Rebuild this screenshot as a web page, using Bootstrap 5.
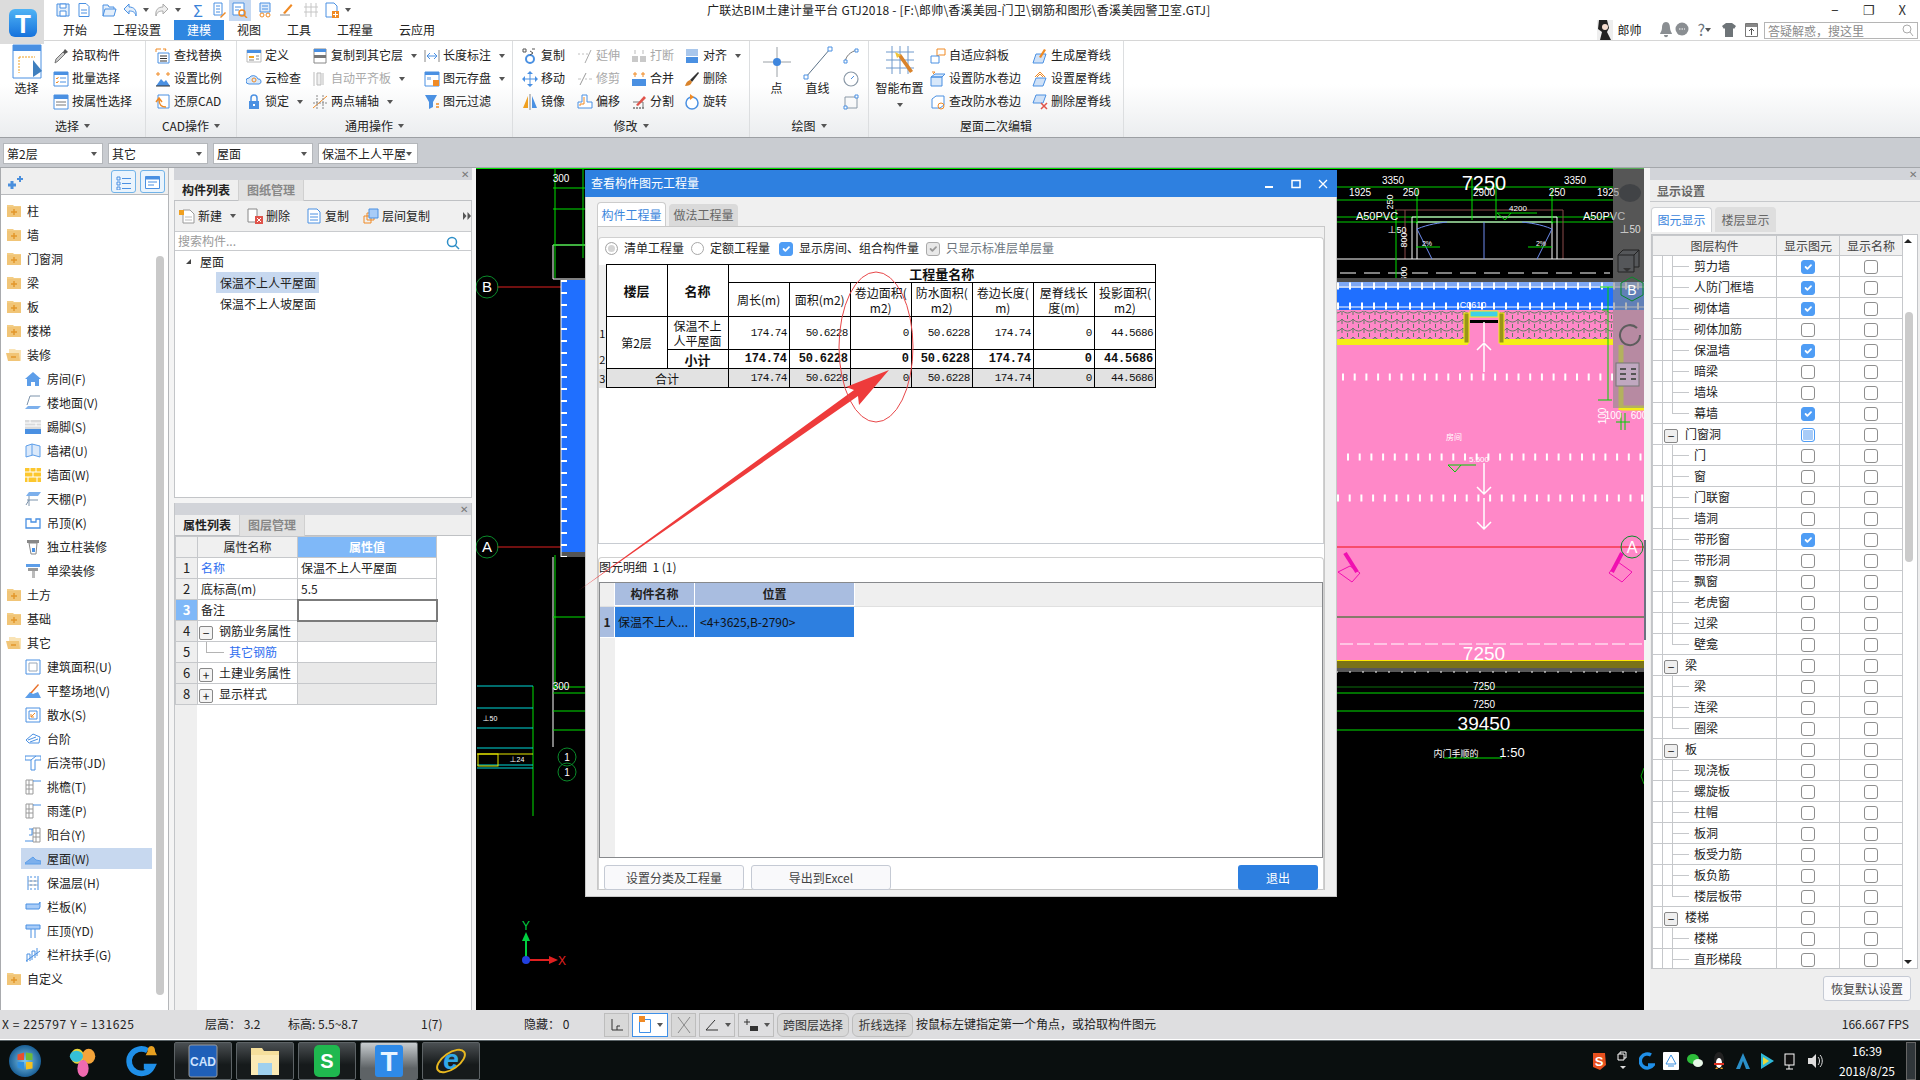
<!DOCTYPE html>
<html lang="zh-CN">
<head>
<meta charset="UTF-8" />
<title>广联达BIM土建计量平台 GTJ2018</title>
<link href="https://cdn.jsdelivr.net/npm/bootstrap@5.3.0/dist/css/bootstrap.min.css" rel="stylesheet">
<style>
  html, body { margin: 0; width: 1920px; height: 1080px; overflow: hidden; }
  body { font: 12px/1.2 "Noto Sans CJK SC", "Liberation Sans", sans-serif; color: #222; background: #f4f4f4; }
  .ico { width: 16px; height: 16px; flex: none; }
  .tri { width: 0; height: 0; flex: none; border-left: 3px solid transparent; border-right: 3px solid transparent; border-top: 4px solid #555; margin-left: 5px; }
  .app-wrap { width: 1920px; height: 1080px; }

  /* title + tabs */
  .app-top { height: 41px; background: #fff; border-bottom: 1px solid #d6d6d6; }
  .app-logo { width: 44px; height: 44px; flex: none; background: #dcdcdc; position: relative; z-index: 3; }
  .tt-row { height: 20px; }
  .tt-txt { letter-spacing: .2px; }
  .qat { width: 663px; padding-left: 11px; gap: 5px; }
  .qat .ico.on { background: #c6d9f2; outline: 3px solid #c6d9f2; }
  .qat-sum { color: #3b83d8; font-size: 16px; line-height: 16px; width: 16px; text-align: center; }
  .win-btns { gap: 24px; padding-right: 14px; font-size: 13px; color: #333; }
  .rb-tabs { height: 20px; padding-left: 6px; }
  .rb-tabs .nav-link { padding: 2px 13px 0; color: #222; font-size: 12px; line-height: 16px; height: 20px; }
  .rb-tabs .nav-link.active { background: #2e86e0; color: #fff; }
  .usr-box { padding-right: 2px; }
  .usr-name { width: 42px; margin-left: 4px; }
  .u2 { margin-left: 2px; } .u8 { margin-left: 8px; } .u11 { margin-left: 11px; } .u9 { margin-left: 9px; }
  .srch-box { width: 154px; height: 17px; border: 1px solid #b5b5b5; color: #8a8a8a; padding: 0 3px; line-height: 15px; font-size: 12px; margin-left: 6px; }

  /* ribbon */
  .ribbon { height: 97px; background: linear-gradient(#fff 45%, #ebedef); border-bottom: 1px solid #9c9fa3; }
  .rb-grp { height: 96px; border-right: 1px solid #dcdee0; flex: none; }
  .rb-cols { height: 74px; padding-top: 3px; }
  .rb-lab { height: 22px; gap: 0; }
  .g1 { width: 146px; } .g2 { width: 91px; } .g3 { width: 276px; }
  .g4 { width: 237px; } .g5 { width: 119px; } .g6 { width: 255px; }
  .rb-it { height: 23px; gap: 3px; white-space: nowrap; }
  .rb-it.off { color: #a9a9a9; }
  .rb-big { text-align: center; flex: none; }
  .rb-bigi { height: 37px; }
  .c53 { width: 53px; } .c9 { padding-left: 9px; }
  .c66 { width: 66px; } .c112 { width: 112px; } .c55 { width: 55px; } .c54 { width: 54px; }
  .bc1 { width: 53px; } .bc2 { width: 41px; margin-left: 6px; } .bc3 { width: 41px; }
  .bc4 { width: 61px; } .c102 { width: 102px; }
  .s15 { width: 16px; margin-left: 5px; }
  .rb-big svg { width: 30px; height: 36px; }

  /* floor / type selectors */
  .sel-row { height: 30px; background: #c9ccd1; border-bottom: 1px solid #a4a7ab; padding: 5px 0 0 3px; gap: 5px; }
  .sel-box { width: 100px; height: 21px; background: #fff; border: 1px solid #b4b7bb; padding: 0 3px; line-height: 19px; }
  .sel-box .tri { margin-left: auto; margin-right: 2px; }

  /* body */
  .work { height: 842px; }
  .nav-pane { width: 169px; background: #fff; border-left: 1px solid #a9abae; border-right: 1px solid #b4b6b9; position: relative; flex: none; }
  .nav-head { height: 27px; background: #efefef; border-bottom: 1px solid #b9bbbe; padding: 2px 3px 0 6px; gap: 4px; }
  .nav-hbtn { width: 25px; height: 23px; background: #eaf4fd; border: 1px solid #72b3e8; border-radius: 3px; padding: 3px 4px; }
  .nav-list { padding-top: 4px; height: 815px; overflow: hidden; }
  .nv-row { height: 24px; padding-left: 5px; gap: 5px; }
  .nv-row.kid { padding-left: 24px; margin-right: 17px; gap: 6px; }
  .nv-row.sel { background: linear-gradient(#c7d8ef,#c7d8ef) 20px 1px/131px 21px no-repeat; margin-right: 0; }
  .nav-scroll { position: absolute; left: 155px; top: 88px; width: 8px; height: 739px; background: #c9c9c9; border-radius: 4px; }
  .mid-pane { width: 298px; margin-left: 5px; flex: none; }
  .pn-hd { height: 12px; background: #d2d4d9; text-align: right; padding-right: 3px; color: #777; font-size: 10px; line-height: 11px; }
  .pn-tabs { height: 21px; background: #efefef; border-bottom: 1px solid #bfc1c4; }
  .pn-tabs .nav-link { padding: 0; width: 65px; height: 21px; line-height: 20px; text-align: center; font-weight: 700; font-size: 12px; color: #222; border-radius: 0; border-right: 1px solid #d0d0d0; }
  .pn-tabs .nav-link.dim { background: #e1e1e1; color: #888; }
  .list-box { height: 297px; border: 1px solid #c3c5c8; border-top: 0; background: #fff; }
  .list-bar { height: 30px; background: #f0f0f0; padding-left: 4px; }
  .bar-it { gap: 3px; }
  .bw1 { width: 68px; } .bw2 { width: 59px; } .bw3 { width: 57px; } .bw4 { width: 100px; }
  .list-find { height: 20px; border-top: 1px solid #c9cbce; border-bottom: 1px solid #c9cbce; color: #9a9a9a; padding: 0 3px; line-height: 18px; }
  .tree-in { padding: 0 0 0 11px; }
  .tree-row { height: 21px; line-height: 21px; }
  .tree-tri { width: 0; height: 0; border-bottom: 5px solid #444; border-left: 5px solid transparent; margin-right: 9px; }
  .tree-kid { margin-left: 30px; padding-left: 4px; width: 103px; }
  .tree-kid.sel { background: #c7d8ef; }
  .prop-box { margin-top: 5px; height: 507px; border: 1px solid #c3c5c8; border-top: 0; }
  .prop-body { height: 474px; background: linear-gradient(#efefef,#efefef) 0 0/22px 100% no-repeat #fff; }
  .prop-tb { width: 261px; table-layout: fixed; border-collapse: collapse; margin: 0; }
  .prop-tb td, .prop-tb th { padding: 0 3px; height: 21px; border: 1px solid #c6c8cb; font-weight: 400; white-space: nowrap; line-height: 19px; background: #fff; box-shadow: none; color: #222; }
  .prop-tb th { background: #f0f0f0; text-align: center; }
  .prop-tb th.val { background: #7fb8f8; color: #fff; font-weight: 700; }
  .prop-tb .idx { background: #efefef; text-align: center; font-size: 13px; width: 22px; padding: 0; }
  .prop-tb .idx.on { background: #7fb8f8; color: #fff; font-weight: 700; }
  .prop-tb .gp td { background: #e9e9e9; }
  .prop-tb td.gpn { background: #fff; padding-left: 1px; }
  .prop-tb .lnk { color: #2f6ff0; }
  .prop-tb td.lnk-kid { padding-left: 31px; background: linear-gradient(#b4b4b4,#b4b4b4) 8px 0/1px 50% no-repeat, linear-gradient(#b4b4b4,#b4b4b4) 8px 50%/18px 1px no-repeat, #fff; }
  .prop-tb td.cur { border: 2px solid #7b7b7b; }
  .pm { display: inline-flex; width: 14px; height: 14px; border: 1px solid #888; border-radius: 2px; background: #f4f4f4; align-items: center; justify-content: center; font-size: 12px; line-height: 12px; margin-right: 6px; vertical-align: -2px; }
  .cad-view { width: 1170px; margin-left: 4px; background: #000; position: relative; flex: none; }
  .cad-svg { display: block; width: 1170px; height: 842px; }
  .cad-svg text { fill: #fff; font-family: "Liberation Sans", "Noto Sans CJK SC", sans-serif; text-anchor: middle; }
  .set-pane { width: 270px; margin-left: 4px; background: #eee; flex: none; }
  .set-ttl { height: 22px; font-weight: 700; color: #666; padding-left: 7px; line-height: 21px; font-size: 12px; border-bottom: 1px solid #c6c8cb; }
  .set-tabs { height: 32px; padding: 5px 0 0 1px; gap: 3px; border: 0; }
  .set-tabs .nav-link { width: 61px; height: 25px; padding: 0; text-align: center; line-height: 24px; font-size: 12px; border-radius: 4px 4px 0 0; border: 1px solid #d0d2d5; border-bottom: 0; }
  .set-tabs .nav-link.active { background: #fff; color: #3c86dc; }
  .set-tabs .nav-link.dim { background: #dedede; color: #666; border-color: #dedede; }
  .set-tbl-w { margin-left: 1px; height: 735px; width: 267px; border: 1px solid #c3c5c8; background: #fff; position: relative; overflow: hidden; }
  .set-tb { width: 250px; table-layout: fixed; border-collapse: collapse; margin: 0; }
  .set-tb td, .set-tb th { padding: 0; height: 21px; border: 1px solid #c6c8cb; text-align: center; font-weight: 400; line-height: 19px; background: #fff; box-shadow: none; color: #222; }
  .set-tb th { height: 19px; background: #f0f0f0; color: #444; }
  .set-tb td.nm { text-align: left; position: relative; padding-left: 41px; background: linear-gradient(#c6c8cb,#c6c8cb) 9px 0/1px 100% no-repeat #fff; }
  .set-tb tr.grp td.nm { padding-left: 11px; }
  .set-tb tr.grp .pm { margin-right: 7px; background: #efefef; vertical-align: -2px; }
  .tr-v { position: absolute; left: 19px; top: 0; width: 1px; height: 100%; background: #c6c8cb; }
  .tr-v.end { height: 50%; }
  .tr-h { position: absolute; left: 19px; top: 50%; width: 17px; height: 1px; background: #c6c8cb; }
  .ck { width: 14px; height: 14px; margin: 0; border: 1px solid #8e8e8e; border-radius: 3px; vertical-align: -3px; float: none; flex: none; }
  .ck:checked { background-color: #4f9df5; border-color: #4f9df5; }
  .ck.part { background: #a8ccf8; box-shadow: inset 0 0 0 1px #fff; border-color: #4f9df5; }
  .ck:disabled { opacity: 1; }
  .ck.gr:checked { background-color: #e8e8e8; border-color: #aaa; background-image: url("data:image/svg+xml,%3csvg xmlns='http://www.w3.org/2000/svg' viewBox='0 0 20 20'%3e%3cpath fill='none' stroke='%23999' stroke-linecap='round' stroke-linejoin='round' stroke-width='3' d='m6 10 3 3 6-6'/%3e%3c/svg%3e"); }
  .set-bar { position: absolute; right: 0; top: 0; width: 15px; height: 100%; }
  .set-thumb { position: absolute; left: 3px; top: 77px; width: 8px; height: 250px; background: #cbcbcb; border-radius: 4px; }
  .set-up, .set-dn { position: absolute; left: 2px; width: 0; height: 0; border-left: 4px solid transparent; border-right: 4px solid transparent; }
  .set-up { top: 4px; border-bottom: 4px solid #222; }
  .set-dn { bottom: 4px; border-top: 4px solid #222; }
  .set-foot { height: 32px; padding: 7px 9px 0 0; }
  .btn-std { height: 25px; padding: 0; font-size: 12px; line-height: 23px; color: #444; background: #f9f9fb; border: 1px solid #c5cad4; border-radius: 3px; }
  .w88 { width: 88px; }

  /* dialog */
  .dlg { left: 585px; top: 170px; width: 752px; height: 727px; background: #f0f0f0; border: 1px solid #c8c8c8; border-top: 0; z-index: 5; }
  .dlg-ttl { height: 27px; background: #2e80e0; color: #fff; padding: 0 9px 0 6px; margin: 0 -1px; line-height: 26px; font-size: 12px; }
  .dlg-ctl { gap: 17px; }
  .dlg-tabs { padding: 5px 0 0 11px; height: 29px; gap: 3px; border: 0; }
  .dlg-tabs .nav-link { width: 69px; height: 24px; padding: 0; text-align: center; font-size: 12px; line-height: 23px; border: 1px solid #ccc; border-bottom: 0; border-radius: 4px 4px 0 0; }
  .dlg-tabs .nav-link.active { background: #fff; color: #3c86dc; }
  .dlg-tabs .nav-link.dim { background: #dadada; color: #666; border-color: #dadada; margin-top: 2px; height: 22px; line-height: 20px; }
  .dlg-frame { margin: 0 11px 0 11px; height: 664px; border: 1px solid #c8c8c8; background: #fff; }
  .dlg-top { height: 317px; background: #f0f0f0; padding-top: 10px; border-bottom: 1px solid #c8ccd2; }
  .dlg-topin { height: 306px; background: #fff; border: 1px solid #d0d0d0; border-bottom: 0; border-radius: 4px 4px 0 0; }
  .opt-row { height: 26px; padding: 0 0 5px 6px; gap: 6px; }
  .opt-gap { margin-right: 1px; }
  .opt-gap2 { margin-right: 3px; }
  .rd { width: 13px; height: 13px; margin: 0; border: 1px solid #a8a8a8; float: none; flex: none; }
  .rd:checked { background: #d4d4d4; border-color: #a8a8a8; box-shadow: inset 0 0 0 2px #fff; background-image: none; }
  .qty-tb { border-collapse: collapse; margin: 0; table-layout: fixed; width: 557px; font-size: 12px; }
  .qty-tb td, .qty-tb th { border: 1px solid #000; padding: 0; text-align: center; vertical-align: middle; line-height: 15px; background: #fff; box-shadow: none; color: #111; font-weight: 400; }
  .qty-tb .ih { border: 0; background: #f0f0f0; width: 7px; font-size: 11px; }
  .qty-tb .b { font-weight: 700; font-size: 13px; }
  .qty-tb td.nm, .qty-tb td.nb { text-align: right; padding-right: 2px; font-family: "Liberation Mono", monospace; }
  .qty-tb td.nm { font-size: 11px; letter-spacing: -.6px; }
  .qty-tb td.nb { font-size: 12px; font-weight: 700; letter-spacing: -.2px; }
  .qty-tb .tot td { background: #e2e2e2; }
  .h18 { height: 18px; } .h34 { height: 34px; } .h33 { height: 33px; } .h19 { height: 19px; }
  .dlg-low { height: 333px; border: 1px solid #d0d0d0; border-bottom: 0; border-radius: 4px 4px 0 0; margin-top: 13px; }
  .low-cap { height: 24px; line-height: 18px; }
  .low-grid { height: 276px; border: 1px solid #87898c; background: linear-gradient(#efefef,#efefef) 0 0/15px 100% no-repeat #fff; }
  .lg-head { height: 24px; background: #efefef; border-bottom: 1px solid #e0e0e0; }
  .lg-c { font-weight: 700; background: #a9bde0; text-align: center; line-height: 22px; border-right: 1px solid #fff; border-bottom: 1px solid #fff; }
  .lg-i { width: 15px; flex: none; border-right: 1px solid #fff; }
  .lg-n { width: 80px; } .lg-p { width: 160px; }
  .lg-row { height: 31px; }
  .lg-row .lg-i { background: #a9bde0; font-weight: 700; text-align: center; line-height: 30px; font-size: 12px; border-bottom: 1px solid #fff; }
  .lg-d { background: #2d7fe0; color: #111; line-height: 30px; border-right: 1px solid #fff; border-bottom: 1px solid #fff; white-space: nowrap; }
  .lg-d.lg-n { padding-left: 3px; }
  .lg-d.lg-p { padding-left: 5px; }
  .low-foot { padding: 7px 5px 0 5px; gap: 7px; }
  .w139 { width: 140px; }
  .btn-exit { width: 80px; height: 25px; padding: 0; background: #2d7fe0; color: #fff; border: 0; border-radius: 3px; font-size: 12px; }

  /* status + taskbar */
  .stat-row { height: 30px; background: #dedee0; border-bottom: 1px solid #fff; padding: 3px 11px 0 2px; }
  .st1 { width: 203px; letter-spacing: .6px; } .st2 { width: 83px; } .st3 { width: 133px; } .st4 { width: 103px; } .st5 { width: 80px; }
  .st-btns { gap: 3px; margin-right: 3px; }
  .st-b { height: 24px; background: #d8d8d8; border: 1px solid #bdbdbd; align-items: center; justify-content: center; }
  .st-w1 { width: 25px; } .st-w2 { width: 36px; background: #fff; border-color: #3e90e8; } .st-wt { padding: 0; font-size: 12px; color: #333; }
  .st-w3 { width: 72px; } .st-w4 { width: 61px; }
  .st-w2.bg-transparent { border-color: #bdbdbd; }
  .taskbar { height: 40px; background: #0a0f0f; border-top: 1px solid #5b6468; }
  .tb-btn { width: 58px; height: 38px; margin-left: 4px; flex: none; background: linear-gradient(#4a4f52,#161a1b 60%); border: 1px solid #5d6366; border-radius: 2px; }
  .tb-btn.on { background: linear-gradient(#c8cdd0,#5e6366 70%); }
  .tb-btn svg { width: 34px; height: 34px; }
  .tb-free { width: 34px; }
  .tb-free svg { width: 32px; height: 34px; }
  .tray { gap: 8px; padding-right: 4px; color: #fff; }
  .tray svg { width: 16px; height: 20px; flex: none; }
  .clock { text-align: center; line-height: 20px; margin-left: 5px; width: 62px; font-size: 12px; }
  .show-desk { width: 10px; height: 38px; border: 1px solid #666; background: #30363a; }
  .mark-svg { position: absolute; left: 0; top: 0; width: 1920px; height: 1080px; z-index: 6; pointer-events: none; }
</style>
</head>
<body>
<svg width="0" height="0" class="position-absolute">
  <defs>
    <symbol id="q-save" viewBox="0 0 16 16"><path d="M2 2h12v12H2z" fill="#e4effb" stroke="#4a90e2"/><path d="M5 2h6v4H5zM5 9h6v5H5z" fill="#fff" stroke="#4a90e2"/></symbol>
    <symbol id="q-new" viewBox="0 0 16 16"><path d="M3 1.500h7l3 3v10H3z" fill="#fff" stroke="#4a90e2"/><path d="M5 8h6M5 11h6" stroke="#4a90e2"/></symbol>
    <symbol id="q-open" viewBox="0 0 16 16"><path d="M2 14V3h5l1 2h5v2M2 14l2-7h11l-2 7z" fill="#e4effb" stroke="#4a90e2"/></symbol>
    <symbol id="q-undo" viewBox="0 0 16 16"><path d="M2 7l5-5v3c5 0 8 3 7 9-1-4-3-5-7-5v3z" fill="#e4effb" stroke="#4a90e2"/></symbol>
    <symbol id="q-redo" viewBox="0 0 16 16"><path d="M14 7L9 2v3c-5 0-8 3-7 9 1-4 3-5 7-5v3z" fill="#eee" stroke="#aaa"/></symbol>
    <symbol id="q-a" viewBox="0 0 16 16"><path d="M3 1h8v12H3z" fill="#fff" stroke="#4a90e2"/><path d="M5 4h4M5 7h4M5 10h4" stroke="#4a90e2"/><path d="M9 15l5-5 1 1-5 5z" fill="#f08a24"/></symbol>
    <symbol id="q-b" viewBox="0 0 16 16"><path d="M1 1h11v12H1z" fill="#fff" stroke="#4a90e2"/><path d="M3 5h6M3 8h4" stroke="#4a90e2"/><circle cx="10" cy="11" r="3" fill="none" stroke="#f08a24" stroke-width="1.500"/><path d="M12 13l3 3" stroke="#f08a24" stroke-width="1.500"/></symbol>
    <symbol id="q-c" viewBox="0 0 16 16"><path d="M3 1h10v9H3z" fill="#dceafa" stroke="#4a90e2"/><circle cx="5" cy="13" r="2" fill="none" stroke="#f08a24"/><circle cx="11" cy="13" r="2" fill="none" stroke="#f08a24"/><path d="M5 4h6M5 7h6" stroke="#4a90e2"/></symbol>
    <symbol id="q-d" viewBox="0 0 16 16"><path d="M2 13h10" stroke="#888"/><path d="M5 11l8-9 1.500 1.500L7 12z" fill="#f08a24"/></symbol>
    <symbol id="q-e" viewBox="0 0 16 16"><path d="M3 1v14M8 1v14M13 1v14M1 5h14M1 10h14" stroke="#c6c6c6"/></symbol>
    <symbol id="q-f" viewBox="0 0 16 16"><path d="M2 1h8l3 3v5M2 1v14h6" fill="#fff" stroke="#4a90e2"/><rect x="8" y="9" width="7" height="7" fill="#f08a24"/><path d="M11.500 10v5M9 12.500h5" stroke="#fff"/></symbol>

    <symbol id="r-sel" viewBox="0 0 30 36"><path d="M1 1h28v33H1z" fill="#fff" stroke="#4a90e2"/><path d="M1 1h28v6H1z" fill="#4a90e2"/><path d="M7 13h16M7 13v16" stroke="#f0a020" stroke-dasharray="2 1"/><path d="M21 16l9 11-9 6z" fill="#3f7fbe"/></symbol>
    <symbol id="r-pick" viewBox="0 0 16 16"><path d="M2 15l1-4 7-7 2 2-7 7z" fill="#ccc" stroke="#777"/><path d="M10 4l2-3 3 3-3 2z" fill="#555"/></symbol>
    <symbol id="r-batch" viewBox="0 0 16 16"><path d="M1 1h14v14H1z" fill="#fff" stroke="#4a90e2"/><path d="M1 1h14v3H1z" fill="#4a90e2"/><path d="M3 7l1 1 1.500-2M3 11l1 1 1.500-2" stroke="#f08a24" fill="none"/><path d="M7 7h6M7 11h6" stroke="#4a90e2"/></symbol>
    <symbol id="r-attr" viewBox="0 0 16 16"><path d="M1 1h14v14H1z" fill="#fff" stroke="#4a90e2"/><path d="M1 1h14v4H1z" fill="#4a90e2"/><path d="M3 8h10M3 11h10" stroke="#777"/></symbol>
    <symbol id="r-find" viewBox="0 0 16 16"><path d="M1 1h5M1 1v3M8 1h3l-1 2" stroke="#f08a24" fill="none"/><path d="M3 5h11v10H3z" fill="#fff" stroke="#4a90e2"/><path d="M5 8h7M5 10.500h7M5 13h7" stroke="#333"/></symbol>
    <symbol id="r-scale" viewBox="0 0 16 16"><path d="M1 3h4M3 1v4M11 3h4M13 1v4" stroke="#f08a24"/><path d="M1 15l5-7 3 3 2-2 4 6z" fill="#4a90e2"/><path d="M1 15h14" stroke="#333"/></symbol>
    <symbol id="r-cadb" viewBox="0 0 16 16"><path d="M3 1h11v13H3z" fill="#fff" stroke="#4a90e2"/><path d="M1 8l3-4 3 4M4 5c0 7 3 8 7 8" stroke="#f08a24" fill="none" stroke-width="1.500"/></symbol>
    <symbol id="r-def" viewBox="0 0 16 16"><path d="M1 2h14v12H1z" fill="#fff" stroke="#bbb"/><path d="M1 2h14v3H1z" fill="#4a90e2"/><path d="M3 8h5v2H3z" fill="#f0a020"/><path d="M10 8h3M10 11h3M3 12h5" stroke="#888"/></symbol>
    <symbol id="r-cloud" viewBox="0 0 16 16"><path d="M3 13a3 3 0 0 1 0-6 5 5 0 0 1 9 1 2.500 2.500 0 0 1 1 5z" fill="#d8e8fa" stroke="#4a90e2"/><circle cx="8" cy="9" r="2" fill="none" stroke="#f08a24"/></symbol>
    <symbol id="r-lock" viewBox="0 0 16 16"><path d="M5 7V4a3 3 0 0 1 6 0v3" fill="none" stroke="#4a90e2" stroke-width="1.500"/><path d="M3 7h10v8H3z" fill="#4a90e2"/><path d="M8 10v2" stroke="#fff" stroke-width="2"/></symbol>
    <symbol id="r-copyf" viewBox="0 0 16 16"><path d="M2 1h12v14H2z" fill="#fff" stroke="#888"/><path d="M2 1h12v3H2z" fill="#4a90e2"/><path d="M2 7h12v3H2z" fill="#777"/></symbol>
    <symbol id="r-align" viewBox="0 0 16 16"><path d="M2 1v14" stroke="#bbb"/><path d="M5 2h4v12H5z" fill="#eee" stroke="#bbb"/><path d="M11 2v12" stroke="#bbb"/></symbol>
    <symbol id="r-axis" viewBox="0 0 16 16"><path d="M1 14L15 2" stroke="#f08a24"/><path d="M5 1v14M11 1v14M1 9h14" stroke="#888" stroke-dasharray="2 1"/></symbol>
    <symbol id="r-dim" viewBox="0 0 16 16"><path d="M1 2v12M15 2v12" stroke="#888"/><path d="M3 8h10M3 8l3-3M3 8l3 3M13 8l-3-3M13 8l-3 3" stroke="#4a90e2" fill="none"/></symbol>
    <symbol id="r-savee" viewBox="0 0 16 16"><path d="M1 1h14v14H1z" fill="#fff" stroke="#4a90e2"/><path d="M1 1h14v3H1z" fill="#4a90e2"/><path d="M3 6h4v3H3z" fill="#a8c8ee"/><path d="M9 9h6v6H9z" fill="#f08a24"/></symbol>
    <symbol id="r-filter" viewBox="0 0 16 16"><path d="M1 1h12L9 8v5l-4 2V8z" fill="#4a90e2"/><path d="M12 10h3M12 13h3" stroke="#f08a24" stroke-width="1.500"/></symbol>
    <symbol id="r-copy" viewBox="0 0 16 16"><path d="M1 1h3v3H1zM10 1h3" stroke="#555" fill="none"/><circle cx="8" cy="11" r="4" fill="none" stroke="#4a90e2" stroke-width="2"/><path d="M8 3l3 2-3 2" stroke="#555" fill="none"/></symbol>
    <symbol id="r-move" viewBox="0 0 16 16"><path d="M8 1v14M1 8h14" stroke="#4a90e2"/><path d="M8 0l3 3H5zM8 16l3-3H5zM0 8l3-3v6zM16 8l-3-3v6z" fill="#4a90e2"/></symbol>
    <symbol id="r-mirror" viewBox="0 0 16 16"><path d="M8 0v16" stroke="#888"/><path d="M6 2v12H1z" fill="#f0a020"/><path d="M10 2v12h5z" fill="#4a90e2"/></symbol>
    <symbol id="r-extend" viewBox="0 0 16 16"><path d="M1 6h2M5 6h2M9 6h2" stroke="#c0c0c0"/><path d="M8 15l6-13" stroke="#aaa"/></symbol>
    <symbol id="r-trim" viewBox="0 0 16 16"><path d="M1 8h3M12 8h3M8 8h2" stroke="#c0c0c0"/><path d="M3 14l6-12" stroke="#999"/></symbol>
    <symbol id="r-offset" viewBox="0 0 16 16"><path d="M5 1h5v7h5v6H1V8h4z" fill="#fff" stroke="#4a90e2"/><path d="M7 3v7H3v2" fill="none" stroke="#f08a24"/></symbol>
    <symbol id="r-break" viewBox="0 0 16 16"><path d="M1 8h6v6H1zM9 8h6v6H9z" fill="#c9c9c9"/><path d="M4 2v4M12 2v4" stroke="#bbb"/></symbol>
    <symbol id="r-merge" viewBox="0 0 16 16"><path d="M1 8h14v7H1z" fill="#4a90e2"/><path d="M4 1v5M12 1v5M2 3h4M10 3h4" stroke="#f08a24"/></symbol>
    <symbol id="r-split" viewBox="0 0 16 16"><path d="M2 14h12" stroke="#333" stroke-dasharray="2 1"/><path d="M2 8h10v6" fill="none" stroke="#777"/><path d="M5 11l8-9 2 2-8 8z" fill="#e0534a"/></symbol>
    <symbol id="r-alignb" viewBox="0 0 16 16"><path d="M2 1h12v7H2z" fill="#a9c7ec"/><path d="M2 9h12v6H2z" fill="#4a90e2"/></symbol>
    <symbol id="r-del" viewBox="0 0 16 16"><path d="M14 1L6 9l2 2 7-9z" fill="#333"/><path d="M1 15c1-3 2-5 5-6l2 2c-1 3-4 4-7 4z" fill="#d9832b"/></symbol>
    <symbol id="r-rot" viewBox="0 0 16 16"><circle cx="8" cy="9" r="6" fill="#fff" stroke="#4a90e2" stroke-width="1.500"/><path d="M6 0l4 3-4 3z" fill="#f08a24"/></symbol>
    <symbol id="r-point" viewBox="0 0 30 36"><path d="M15 3v30M1 18h28" stroke="#9aa0a6"/><circle cx="15" cy="18" r="4" fill="#3f86dd"/></symbol>
    <symbol id="r-line" viewBox="0 0 30 36"><path d="M3 33L27 5" stroke="#5b7288"/><path d="M1 31h4v4H1zM25 3h4v4h-4z" fill="#fff" stroke="#4a90e2"/></symbol>
    <symbol id="r-arc" viewBox="0 0 16 16"><path d="M2 14C3 8 7 4 14 2" fill="none" stroke="#777"/><path d="M1 12h3v3H1zM12 1h3v3h-3z" fill="#fff" stroke="#4a90e2"/></symbol>
    <symbol id="r-circ" viewBox="0 0 16 16"><circle cx="8" cy="8" r="7" fill="none" stroke="#8a98a6" stroke-width="1.200"/><path d="M8 8l3-3" stroke="#4a90e2"/></symbol>
    <symbol id="r-rect" viewBox="0 0 16 16"><path d="M2 3h12v11H2z" fill="none" stroke="#8a98a6"/><path d="M1 12h3v3H1zM12 1h3v3h-3z" fill="#fff" stroke="#4a90e2"/></symbol>
    <symbol id="r-smart" viewBox="0 0 30 36"><path d="M7 2v28M15 2v28M23 2v28M1 8h28M1 16h28M1 24h28" stroke="#6e99cc"/><path d="M13 12l12 17 3-2-12-17z" fill="#d9832b"/><path d="M10 8l2 6 4-3z" fill="#f0c43a"/></symbol>
    <symbol id="r-adapt" viewBox="0 0 16 16"><path d="M7 1h8v6H9L7 8z" fill="#fff" stroke="#f08a24"/><path d="M1 8h8v7H1z" fill="#fff" stroke="#4a90e2"/></symbol>
    <symbol id="r-water" viewBox="0 0 16 16"><path d="M1 6l4-3h10l-3 3zM1 6h11v9H1z" fill="#d8e8fa" stroke="#4a90e2"/><path d="M2 1h3M3 3l2-2" stroke="#f08a24"/></symbol>
    <symbol id="r-wfix" viewBox="0 0 16 16"><path d="M2 5l4-3h8v9l-4 3H2z" fill="#fff" stroke="#4a90e2"/><circle cx="11" cy="12" r="3" fill="none" stroke="#f08a24"/></symbol>
    <symbol id="r-ridge" viewBox="0 0 16 16"><path d="M1 15l3-9h10l-3 9z" fill="#cfe1f7" stroke="#4a90e2"/><path d="M7 9l5-8 2 1-5 8z" fill="#f08a24"/></symbol>
    <symbol id="r-ridge2" viewBox="0 0 16 16"><path d="M1 15l3-8h10l-3 8z" fill="#cfe1f7" stroke="#4a90e2"/><path d="M3 6l5-5 5 5M5 6l3-3 3 3" fill="none" stroke="#f08a24"/></symbol>
    <symbol id="r-ridge3" viewBox="0 0 16 16"><path d="M1 9l3-8h10l-3 8z" fill="#cfe1f7" stroke="#4a90e2"/><path d="M9 9l6 6M15 9l-6 6" stroke="#e0534a" stroke-width="1.500"/></symbol>

    <symbol id="f-plus" viewBox="0 0 16 16"><path d="M1 2h6l1 1h7v11H1z" fill="#f3cd85"/><path d="M1 4h14v10H1z" fill="#f1c577"/><path d="M8 6v6M5 9h6" stroke="#e2962b" stroke-width="1.500"/></symbol>
    <symbol id="f-open" viewBox="0 0 16 16"><path d="M3 2h6l1 1h5v11H3z" fill="#f9e3b5"/><path d="M0 6h13l1 8H2z" fill="#f1c577"/><path d="M5 10h5" stroke="#e2962b" stroke-width="1.500"/></symbol>
    <symbol id="n-room" viewBox="0 0 16 16"><path d="M8 1L0 8h2v7h4v-4h4v4h4V8h2z" fill="#5d9ee9"/></symbol>
    <symbol id="n-floor" viewBox="0 0 16 16"><path d="M5 1h10M5 1L2 10" stroke="#7d93ab" fill="none"/><path d="M3 11h13l-3 3H0z" fill="#7db0ec"/></symbol>
    <symbol id="n-skirt" viewBox="0 0 16 16"><path d="M0 1h16v9H0z" fill="#d9dadb"/><path d="M0 4h16M0 7h16M5 1v3M11 4v3" stroke="#fff"/><path d="M0 10h16v5H0z" fill="#4a90e2"/></symbol>
    <symbol id="n-dado" viewBox="0 0 16 16"><path d="M1 14V3l6-2 8 2v11l-7-2z" fill="#dbe9fa" stroke="#5d9ee9"/><path d="M7 1v11" stroke="#5d9ee9"/></symbol>
    <symbol id="n-wall" viewBox="0 0 16 16"><path d="M0 1h16v14H0z" fill="#fcc72e"/><path d="M0 5h16M0 10h16M5 1v4M11 1v4M8 5v5M3 10v5M12 10v5" stroke="#fff"/></symbol>
    <symbol id="n-ceil" viewBox="0 0 16 16"><path d="M4 1h12l-3 4H1z" fill="#7db0ec"/><path d="M2 9h11M4 5v10M1 14l3-5" stroke="#7d93ab" fill="none"/></symbol>
    <symbol id="n-hang" viewBox="0 0 16 16"><path d="M1 4h5v3h5V4h4v9H1z" fill="none" stroke="#4a90e2" stroke-width="1.300"/></symbol>
    <symbol id="n-col" viewBox="0 0 16 16"><path d="M2 1h12v3H2z" fill="#888"/><path d="M4 4h8l-1 11H6z" fill="#fff" stroke="#888"/><path d="M7 9h3v4H7z" fill="#4a90e2"/></symbol>
    <symbol id="n-beam" viewBox="0 0 16 16"><path d="M1 1h14v3H1z" fill="#5d9ee9"/><path d="M3 5h10v3H3z" fill="#999"/><path d="M7 8h3v7H7z" fill="#bbb"/></symbol>
    <symbol id="n-area" viewBox="0 0 16 16"><path d="M1 1h14v14H1z" fill="none" stroke="#4a90e2"/><path d="M4 4h8v8H4z" fill="#fff" stroke="#9aa8b8"/></symbol>
    <symbol id="n-site" viewBox="0 0 16 16"><path d="M0 15l5-6 3 2 5-2 3 6z" fill="#5d9ee9"/><path d="M5 10l8-9 1 1-7 8z" fill="#e8702a"/></symbol>
    <symbol id="n-apron" viewBox="0 0 16 16"><path d="M1 1h14v14H1z" fill="#fff" stroke="#4a90e2"/><path d="M4 4h8v8H4z" fill="#fff" stroke="#4a90e2"/><path d="M10 6l-4 4M6 7v3h3" stroke="#f08a24" fill="none"/></symbol>
    <symbol id="n-step" viewBox="0 0 16 16"><path d="M1 9l7-6 7 3-1 6H4z" fill="#fff" stroke="#4a90e2"/><path d="M3 9l8-3M5 11l8-3" stroke="#4a90e2"/></symbol>
    <symbol id="n-post" viewBox="0 0 16 16"><path d="M0 1h16v4h-6v10H6V5H0z" fill="#fff" stroke="#4a90e2"/><path d="M6 5l5-4" stroke="#4a90e2"/></symbol>
    <symbol id="n-eave" viewBox="0 0 16 16"><path d="M1 1h7v14H1zM1 6h7M1 10h7M4 1v14" fill="#fff" stroke="#999"/><path d="M8 2h8" stroke="#4a90e2"/></symbol>
    <symbol id="n-balc" viewBox="0 0 16 16"><path d="M8 1h7v14H8zM8 6h7M8 10h7M11 1v14" fill="#fff" stroke="#999"/><path d="M0 14h8M4 2h4M7 2v6H4" stroke="#4a90e2" fill="none"/></symbol>
    <symbol id="n-roof" viewBox="0 0 16 16"><path d="M0 12l4-3 4-3 3 3 5 1v3H0z" fill="#7db0ec" stroke="#5d9ee9"/></symbol>
    <symbol id="n-ins" viewBox="0 0 16 16"><path d="M3 1v14M13 1v14" stroke="#4a90e2"/><path d="M6 1v14M10 1v14" stroke="#4a90e2" stroke-dasharray="2 2"/><path d="M3 6h10M3 10h10" stroke="#9aa8b8"/></symbol>
    <symbol id="n-rail" viewBox="0 0 16 16"><path d="M1 5h13l1-2v5l-1 2H1z" fill="#a8ccf8" stroke="#4a90e2"/></symbol>
    <symbol id="n-cope" viewBox="0 0 16 16"><path d="M1 2h14v4H1z" fill="#a8ccf8" stroke="#4a90e2"/><path d="M6 6v9M10 6v9" stroke="#4a90e2"/></symbol>
    <symbol id="n-hand" viewBox="0 0 16 16"><path d="M1 14l14-10" stroke="#4a90e2"/><path d="M2 15V7h3v7M7 13V4h3v7M12 9V1" stroke="#4a90e2" fill="none"/></symbol>
    <symbol id="l-new" viewBox="0 0 16 16"><path d="M4 2h7l4 4v9H4z" fill="#fff" stroke="#999"/><path d="M6 9h7M6 12h7" stroke="#bbb"/><path d="M0 2h5v5H0z" fill="#f0a020"/></symbol>
    <symbol id="l-del" viewBox="0 0 16 16"><path d="M1 1h9v13H1z" fill="#fff" stroke="#888"/><path d="M8 8h8v8H8z" fill="#e0534a"/><path d="M10 10l4 4M14 10l-4 4" stroke="#fff"/></symbol>
    <symbol id="l-copy" viewBox="0 0 16 16"><path d="M2 1h9l3 3v11H2z" fill="#fff" stroke="#4a90e2"/><path d="M4 6h8M4 9h8M4 12h8" stroke="#4a90e2"/></symbol>
    <symbol id="l-flr" viewBox="0 0 16 16"><path d="M1 8h7v7H1z" fill="none" stroke="#f08a24"/><path d="M4 5h7v7H4z" fill="none" stroke="#f08a24"/><path d="M6 1h9v9H6z" fill="#a8ccf8" stroke="#4a90e2"/></symbol>
  </defs>
</svg>

<div class="app-wrap d-flex flex-column">
  <div class="app-top d-flex">
    <div class="app-logo">
      <svg width="44" height="44"><defs><linearGradient id="lg" x1="0" y1="0" x2="0" y2="1"><stop offset="0" stop-color="#4fb3f5"/><stop offset="1" stop-color="#1672dc"/></linearGradient></defs><rect x="9" y="9" width="28" height="28" rx="6" fill="url(#lg)"/><text x="23" y="33" font-family="Liberation Sans" font-weight="700" font-size="26" fill="#fff" text-anchor="middle">T</text></svg>
    </div>
    <div class="flex-grow-1">
      <div class="tt-row d-flex align-items-center">
        <div class="qat d-flex align-items-center">
          <svg class="ico"><use href="#q-save"/></svg>
          <svg class="ico me-1"><use href="#q-new"/></svg>
          <svg class="ico"><use href="#q-open"/></svg>
          <svg class="ico"><use href="#q-undo"/></svg><span class="tri m-0"></span>
          <svg class="ico"><use href="#q-redo"/></svg><span class="tri m-0 me-1"></span>
          <span class="qat-sum">Σ</span>
          <svg class="ico"><use href="#q-a"/></svg>
          <svg class="ico on me-1"><use href="#q-b"/></svg>
          <svg class="ico"><use href="#q-c"/></svg>
          <svg class="ico me-1"><use href="#q-d"/></svg>
          <svg class="ico"><use href="#q-e"/></svg>
          <svg class="ico"><use href="#q-f"/></svg>
          <span class="tri m-0"></span>
        </div>
        <span class="tt-txt">广联达BIM土建计量平台 GTJ2018 - [F:\郎帅\香溪美园-门卫\钢筋和图形\香溪美园警卫室.GTJ]</span>
        <div class="win-btns d-flex align-items-center ms-auto">
          <span>−</span><span>❐</span><span>X</span>
        </div>
      </div>
      <div class="d-flex">
        <ul class="nav rb-tabs">
          <li class="nav-item"><a class="nav-link" href="#">开始</a></li>
          <li class="nav-item"><a class="nav-link" href="#">工程设置</a></li>
          <li class="nav-item"><a class="nav-link active" href="#">建模</a></li>
          <li class="nav-item"><a class="nav-link" href="#">视图</a></li>
          <li class="nav-item"><a class="nav-link" href="#">工具</a></li>
          <li class="nav-item"><a class="nav-link" href="#">工程量</a></li>
          <li class="nav-item"><a class="nav-link" href="#">云应用</a></li>
        </ul>
        <div class="usr-box d-flex align-items-center ms-auto">
          <svg width="16" height="20"><rect width="16" height="20" fill="#eee"/><path d="M2 0h8l2 8-2 4 4 8H3l2-8-4-3z" fill="#222"/><circle cx="8" cy="7" r="3" fill="#f5ddd0"/></svg>
          <span class="usr-name">郎帅</span>
          <svg width="14" height="18"><path d="M7 1c3 0 4 3 4 6 0 3 2 5 2 6H1c0-1 2-3 2-6 0-3 1-6 4-6zM5 14h4c0 3-4 3-4 0z" fill="#8a8e92"/></svg>
          <svg class="u2" width="14" height="18"><circle cx="7" cy="8" r="6.500" fill="#8a8e92"/><path d="M3 14l1-4h4z" fill="#8a8e92"/><path d="M4 8h6" stroke="#fff" stroke-dasharray="1.500 1"/></svg>
          <span class="text-secondary fs-6 u8">?</span><span class="tri m-0"></span>
          <svg class="u11" width="14" height="16"><path d="M4 1h6l4 3-2 3-1-1v9H3V6L2 7 0 4z" fill="#6e7478"/></svg>
          <svg class="u9" width="13" height="16"><path d="M.5 1.500h12v13H.5z" fill="#fff" stroke="#777"/><path d="M1 2h11v3H1z" fill="#888"/><path d="M6.500 13V7M4 9l2.500-2.500L9 9" stroke="#555" fill="none"/></svg>
          <div class="srch-box d-flex justify-content-between">答疑解惑，搜这里<svg width="12" height="14"><circle cx="5" cy="6" r="4" fill="none" stroke="#aaa"/><path d="M8 9l3 4" stroke="#aaa"/></svg></div>
        </div>
      </div>
    </div>
  </div>

  <div class="ribbon d-flex">
    <div class="rb-grp g1">
      <div class="rb-cols d-flex">
        <div class="rb-big bc1"><div class="rb-bigi"><svg><use href="#r-sel"/></svg></div>选择</div>
        <div>
          <div class="rb-it d-flex align-items-center"><svg class="ico"><use href="#r-pick"/></svg>拾取构件</div>
          <div class="rb-it d-flex align-items-center"><svg class="ico"><use href="#r-batch"/></svg>批量选择</div>
          <div class="rb-it d-flex align-items-center"><svg class="ico"><use href="#r-attr"/></svg>按属性选择</div>
        </div>
      </div>
      <div class="rb-lab d-flex align-items-center justify-content-center">选择<span class="tri"></span></div>
    </div>
    <div class="rb-grp g2">
      <div class="rb-cols d-flex c9">
        <div>
          <div class="rb-it d-flex align-items-center"><svg class="ico"><use href="#r-find"/></svg>查找替换</div>
          <div class="rb-it d-flex align-items-center"><svg class="ico"><use href="#r-scale"/></svg>设置比例</div>
          <div class="rb-it d-flex align-items-center"><svg class="ico"><use href="#r-cadb"/></svg>还原CAD</div>
        </div>
      </div>
      <div class="rb-lab d-flex align-items-center justify-content-center">CAD操作<span class="tri"></span></div>
    </div>
    <div class="rb-grp g3">
      <div class="rb-cols d-flex c9">
        <div class="c66">
          <div class="rb-it d-flex align-items-center"><svg class="ico"><use href="#r-def"/></svg>定义</div>
          <div class="rb-it d-flex align-items-center"><svg class="ico"><use href="#r-cloud"/></svg>云检查</div>
          <div class="rb-it d-flex align-items-center"><svg class="ico"><use href="#r-lock"/></svg>锁定<span class="tri"></span></div>
        </div>
        <div class="c112">
          <div class="rb-it d-flex align-items-center"><svg class="ico"><use href="#r-copyf"/></svg>复制到其它层<span class="tri"></span></div>
          <div class="rb-it off d-flex align-items-center"><svg class="ico"><use href="#r-align"/></svg>自动平齐板<span class="tri"></span></div>
          <div class="rb-it d-flex align-items-center"><svg class="ico"><use href="#r-axis"/></svg>两点辅轴<span class="tri"></span></div>
        </div>
        <div>
          <div class="rb-it d-flex align-items-center"><svg class="ico"><use href="#r-dim"/></svg>长度标注<span class="tri"></span></div>
          <div class="rb-it d-flex align-items-center"><svg class="ico"><use href="#r-savee"/></svg>图元存盘<span class="tri"></span></div>
          <div class="rb-it d-flex align-items-center"><svg class="ico"><use href="#r-filter"/></svg>图元过滤</div>
        </div>
      </div>
      <div class="rb-lab d-flex align-items-center justify-content-center">通用操作<span class="tri"></span></div>
    </div>
    <div class="rb-grp g4">
      <div class="rb-cols d-flex c9">
        <div class="c55">
          <div class="rb-it d-flex align-items-center"><svg class="ico"><use href="#r-copy"/></svg>复制</div>
          <div class="rb-it d-flex align-items-center"><svg class="ico"><use href="#r-move"/></svg>移动</div>
          <div class="rb-it d-flex align-items-center"><svg class="ico"><use href="#r-mirror"/></svg>镜像</div>
        </div>
        <div class="c54">
          <div class="rb-it off d-flex align-items-center"><svg class="ico"><use href="#r-extend"/></svg>延伸</div>
          <div class="rb-it off d-flex align-items-center"><svg class="ico"><use href="#r-trim"/></svg>修剪</div>
          <div class="rb-it d-flex align-items-center"><svg class="ico"><use href="#r-offset"/></svg>偏移</div>
        </div>
        <div class="c53">
          <div class="rb-it off d-flex align-items-center"><svg class="ico"><use href="#r-break"/></svg>打断</div>
          <div class="rb-it d-flex align-items-center"><svg class="ico"><use href="#r-merge"/></svg>合并</div>
          <div class="rb-it d-flex align-items-center"><svg class="ico"><use href="#r-split"/></svg>分割</div>
        </div>
        <div>
          <div class="rb-it d-flex align-items-center"><svg class="ico"><use href="#r-alignb"/></svg>对齐<span class="tri"></span></div>
          <div class="rb-it d-flex align-items-center"><svg class="ico"><use href="#r-del"/></svg>删除</div>
          <div class="rb-it d-flex align-items-center"><svg class="ico"><use href="#r-rot"/></svg>旋转</div>
        </div>
      </div>
      <div class="rb-lab d-flex align-items-center justify-content-center">修改<span class="tri"></span></div>
    </div>
    <div class="rb-grp g5">
      <div class="rb-cols d-flex">
        <div class="rb-big bc2"><div class="rb-bigi"><svg><use href="#r-point"/></svg></div>点</div>
        <div class="rb-big bc3"><div class="rb-bigi"><svg><use href="#r-line"/></svg></div>直线</div>
        <div class="s15">
          <div class="rb-it d-flex align-items-center"><svg class="ico"><use href="#r-arc"/></svg></div>
          <div class="rb-it d-flex align-items-center"><svg class="ico"><use href="#r-circ"/></svg></div>
          <div class="rb-it d-flex align-items-center"><svg class="ico"><use href="#r-rect"/></svg></div>
        </div>
      </div>
      <div class="rb-lab d-flex align-items-center justify-content-center">绘图<span class="tri"></span></div>
    </div>
    <div class="rb-grp g6">
      <div class="rb-cols d-flex">
        <div class="rb-big bc4"><div class="rb-bigi"><svg><use href="#r-smart"/></svg></div>智能布置<div class="d-flex justify-content-center pt-2"><span class="tri m-0"></span></div></div>
        <div class="c102">
          <div class="rb-it d-flex align-items-center"><svg class="ico"><use href="#r-adapt"/></svg>自适应斜板</div>
          <div class="rb-it d-flex align-items-center"><svg class="ico"><use href="#r-water"/></svg>设置防水卷边</div>
          <div class="rb-it d-flex align-items-center"><svg class="ico"><use href="#r-wfix"/></svg>查改防水卷边</div>
        </div>
        <div>
          <div class="rb-it d-flex align-items-center"><svg class="ico"><use href="#r-ridge"/></svg>生成屋脊线</div>
          <div class="rb-it d-flex align-items-center"><svg class="ico"><use href="#r-ridge2"/></svg>设置屋脊线</div>
          <div class="rb-it d-flex align-items-center"><svg class="ico"><use href="#r-ridge3"/></svg>删除屋脊线</div>
        </div>
      </div>
      <div class="rb-lab d-flex align-items-center justify-content-center">屋面二次编辑</div>
    </div>
  </div>

  <div class="sel-row d-flex">
    <div class="sel-box d-flex align-items-center">第2层<span class="tri"></span></div>
    <div class="sel-box d-flex align-items-center">其它<span class="tri"></span></div>
    <div class="sel-box d-flex align-items-center">屋面<span class="tri"></span></div>
    <div class="sel-box d-flex align-items-center">保温不上人平屋<span class="tri"></span></div>
  </div>

  <div class="work d-flex">
    <!-- 导航树 -->
    <div class="nav-pane">
      <div class="nav-head d-flex align-items-start">
        <svg class="ico mt-1 me-auto" viewBox="0 0 16 16"><path d="M1 11h8M5 7v8" stroke="#4a8fdd" stroke-width="3"/><path d="M10 5h6M13 2v6" stroke="#4a8fdd" stroke-width="2"/></svg>
        <div class="nav-hbtn"><svg width="15" height="15"><path d="M1 2h3v3H1zM1 7h3v3H1zM1 12h3v3H1z" fill="none" stroke="#4a90e2"/><path d="M6 3.500h9M6 8.500h9M6 13.500h9" stroke="#4a90e2"/></svg></div>
        <div class="nav-hbtn"><svg width="15" height="15"><path d="M.5 1.500h14v12H.5z" fill="#fff" stroke="#4a90e2"/><path d="M.5 1.500h14v3H.5z" fill="#4a90e2"/><path d="M3 7h9M3 10h6" stroke="#4a90e2"/></svg></div>
      </div>
      <div class="nav-list" id="navList"></div>
      <div class="nav-scroll"></div>
    </div>

    <div class="mid-pane">
      <div class="pn-hd">✕</div>
      <ul class="nav pn-tabs">
        <li class="nav-item"><a class="nav-link" href="#">构件列表</a></li>
        <li class="nav-item"><a class="nav-link dim" href="#">图纸管理</a></li>
      </ul>
      <div class="list-box">
        <div class="list-bar d-flex align-items-center">
          <div class="bar-it bw1 d-flex align-items-center"><svg class="ico"><use href="#l-new"/></svg>新建<span class="tri"></span></div>
          <div class="bar-it bw2 d-flex align-items-center"><svg class="ico"><use href="#l-del"/></svg>删除</div>
          <div class="bar-it bw3 d-flex align-items-center"><svg class="ico"><use href="#l-copy"/></svg>复制</div>
          <div class="bar-it bw4 d-flex align-items-center"><svg class="ico"><use href="#l-flr"/></svg>层间复制</div>
          <svg width="8" height="8"><path d="M0 0l3.500 4L0 8zM4.500 0L8 4 4.500 8z" fill="#555"/></svg>
        </div>
        <div class="list-find d-flex justify-content-between">搜索构件...<svg width="14" height="16" class="me-2 mt-1"><circle cx="6" cy="6" r="4.500" fill="none" stroke="#2e8fc8" stroke-width="1.500"/><path d="M9 9l4 4" stroke="#2e8fc8" stroke-width="1.500"/></svg></div>
        <div class="tree-in">
          <div class="tree-row d-flex align-items-center"><span class="tree-tri"></span>屋面</div>
          <div class="tree-row tree-kid sel">保温不上人平屋面</div>
          <div class="tree-row tree-kid">保温不上人坡屋面</div>
        </div>
      </div>
      <div class="prop-box">
        <div class="pn-hd">✕</div>
        <ul class="nav pn-tabs">
          <li class="nav-item"><a class="nav-link" href="#">属性列表</a></li>
          <li class="nav-item"><a class="nav-link dim" href="#">图层管理</a></li>
        </ul>
        <div class="prop-body">
          <table class="table prop-tb">
            <colgroup><col style="width:22px"><col style="width:100px"><col style="width:139px"></colgroup>
            <tr><th class="idx"></th><th>属性名称</th><th class="val">属性值</th></tr>
            <tr><td class="idx">1</td><td class="lnk">名称</td><td>保温不上人平屋面</td></tr>
            <tr><td class="idx">2</td><td>底标高(m)</td><td>5.5</td></tr>
            <tr><td class="idx on">3</td><td>备注</td><td class="cur"></td></tr>
            <tr class="gp"><td class="idx">4</td><td class="gpn"><span class="pm">−</span>钢筋业务属性</td><td></td></tr>
            <tr><td class="idx">5</td><td class="lnk lnk-kid">其它钢筋</td><td></td></tr>
            <tr class="gp"><td class="idx">6</td><td class="gpn"><span class="pm">+</span>土建业务属性</td><td></td></tr>
            <tr class="gp"><td class="idx">8</td><td class="gpn"><span class="pm">+</span>显示样式</td><td></td></tr>
          </table>
        </div>
      </div>
    </div>

    <!-- CAD 视图 -->
    <div class="cad-view">
      <svg class="cad-svg" viewBox="476 168 1170 842">
        <defs>
          <pattern id="tile" width="11" height="9" patternUnits="userSpaceOnUse"><rect width="11" height="9" fill="#ff88c8"/><path d="M0 4c3 4 8 4 11 0M5.500 0v4M0 4v5M11 4v5" fill="none" stroke="#5f7a62"/></pattern>
        </defs>
        <!-- 左侧 -->
        <path d="M476 168h1170" stroke="#00e000" stroke-width="2"/>
        <path d="M553 245h32M553 279h32M553 245v34M553 557v190" stroke="#fff" fill="none"/>
        <path d="M555 168v110M555 555v135M583 168v90" stroke="#00e000" fill="none"/>
        <path d="M497 287h64M497 547h64" stroke="#e02020"/>
        <path d="M553 188h32M553 209h32M553 245h32M553 617h32M553 687h32M553 693h32M553 711h32M553 730h32M533 686v130" stroke="#00e000"/>
        <rect x="561" y="280" width="24" height="277" fill="#1f6fff"/>
        <rect x="561" y="552" width="24" height="5" fill="#555"/>
        <path d="M564 280v277" stroke="#fff" stroke-width="6" stroke-dasharray="2 10"/>
        <path d="M561 280v277" stroke="#fff"/>
        <path d="M477 686h56M477 708h56M477 728h56M477 748h56M477 765h56M477 768h56" stroke="#00d8d8"/>
        <path d="M477 754h56" stroke="#e8e800"/>
        <rect x="478" y="754" width="20" height="12" fill="none" stroke="#e8e800"/>
        <circle cx="487" cy="287" r="11" fill="none" stroke="#0a8a2a"/><text x="487" y="292" font-size="15">B</text>
        <circle cx="487" cy="547" r="11" fill="none" stroke="#0a8a2a"/><text x="487" y="552" font-size="15">A</text>
        <circle cx="567" cy="757" r="9" fill="none" stroke="#0a8a2a"/><text x="567" y="761" font-size="10">1</text>
        <circle cx="567" cy="772" r="9" fill="none" stroke="#0a8a2a"/><text x="567" y="776" font-size="10">1</text>
        <text x="561" y="182" font-size="10">300</text>
        <text x="561" y="690" font-size="10">300</text>
        <text x="490" y="721" font-size="7">⊥50</text>
        <text x="517" y="762" font-size="7">⊥24</text>
        <path d="M526 960V934" stroke="#00d040" stroke-width="2"/><path d="M526 932l-4 9h8z" fill="#00d040"/>
        <path d="M526 960h26" stroke="#e02020" stroke-width="2"/><path d="M558 960l-9-4v8z" fill="#e02020"/>
        <circle cx="526" cy="960" r="4" fill="#2040e0"/>
        <text x="526" y="930" font-size="12" style="fill:#00d040">Y</text>
        <text x="562" y="965" font-size="12" style="fill:#e02020">X</text>

        <!-- 右侧 -->
        <path d="M1337 187h276M1337 200h276M1337 217h276M1337 222h276" stroke="#00d000"/>
        <path d="M1395 210h168M1405 210v49M1563 210v49" stroke="#8a4a4a" fill="none"/>
        <path d="M1412 259v-42h145v42M1417 259v-37h135v37M1337 259h276" stroke="#fff" fill="none"/>
        <path d="M1340 273h270" stroke="#fff" stroke-dasharray="16 8"/>
        <path d="M1484 222v37M1417 229l15 30M1552 229l-15 30M1417 229c12-5 22-6 30-7M1552 229c-12-5-22-6-30-7" stroke="#6e8cf0" fill="none"/>
        <path d="M1396 210v78M1472 178v42M1496 178v42M1417 190v34M1552 190v34M1381 288h22M1416 247h24M1528 247h24" stroke="#00e000" fill="none"/>
        <path d="M1497 213l8 7 6-7zM1511 213h26" stroke="#00e000" fill="none"/>
        <text x="1393" y="184" font-size="10">3350</text><text x="1575" y="184" font-size="10">3350</text>
        <text x="1484" y="190" font-size="20">7250</text>
        <text x="1360" y="196" font-size="10">1925</text><text x="1411" y="196" font-size="10">250</text><text x="1484" y="196" font-size="10">2900</text><text x="1557" y="196" font-size="10">250</text><text x="1608" y="196" font-size="10">1925</text>
        <text x="1377" y="220" font-size="11">A50PVC</text><text x="1604" y="220" font-size="11">A50PVC</text>
        <text x="1518" y="211" font-size="8">4200</text>
        <text x="1427" y="246" font-size="7">2%</text><text x="1541" y="246" font-size="7">2%</text>
        <text x="1397" y="233" font-size="9">⊥50</text>
        <text transform="translate(1407 240) rotate(-90)" font-size="9">800</text>
        <text transform="translate(1407 274) rotate(-90)" font-size="9">600</text>
        <text transform="translate(1393 202) rotate(-90)" font-size="9">250</text>
        <rect x="1337" y="278" width="276" height="4" fill="#4a4a4a"/>
        <rect x="1337" y="282" width="309" height="28" fill="#1f6fff"/>
        <rect x="1337" y="282" width="309" height="6" fill="#7da7f5"/>
        <path d="M1337 287h309M1337 307h309" stroke="#fff"/>
        <path d="M1337 286h309M1337 306h309" stroke="#fff" stroke-width="7" stroke-dasharray="2 10"/>
        <rect x="1337" y="310" width="309" height="350" fill="#ff88c8"/>
        <rect x="1337" y="311" width="131" height="28" fill="url(#tile)"/>
        <rect x="1500" y="311" width="113" height="28" fill="url(#tile)"/>
        <rect x="1337" y="339" width="131" height="6" fill="#f4ee18"/>
        <rect x="1500" y="339" width="113" height="6" fill="#f4ee18"/>
        <rect x="1464" y="313" width="5" height="30" fill="#9a9418" stroke="#f4ee18"/>
        <rect x="1499" y="313" width="5" height="30" fill="#9a9418" stroke="#f4ee18"/>
        <rect x="1470" y="311" width="28" height="6" fill="#3fd0e8" stroke="#f4ee18"/>
        <rect x="1470" y="320" width="28" height="3" fill="#000"/>
        <path d="M1484 322v20M1484 343v29M1477 350l7-7 7 7M1484 463v30M1477 487l7 7 7-7M1484 498v30M1477 522l7 7 7-7" stroke="#fff" fill="none" stroke-width="1.500"/>
        <path d="M1342 377h271" stroke="#fff" stroke-width="7" stroke-dasharray="2 9.700"/>
        <path d="M1347 457h299" stroke="#fff" stroke-width="7" stroke-dasharray="2 9.700"/>
        <path d="M1337 498h309" stroke="#fff" stroke-width="7" stroke-dasharray="2 9.700"/>
        <text x="1454" y="440" font-size="8">房间</text>
        <text x="1479" y="462" font-size="8">5.500</text>
        <path d="M1448 465h28M1448 465l7 7 6-7" stroke="#00d000" fill="none"/>
        <text x="1473" y="308" font-size="9">C0610</text>
        <path d="M1608 287v113M1600 287h13M1608 310h-6M1598 400h14M1621 413v17M1625 413v17M1616 422h14" stroke="#00d000" fill="none"/>
        <path d="M1621 345v65M1621 408h25" stroke="#f4ee18" stroke-width="5" fill="none"/>
        <text x="1613" y="419" font-size="10">100</text>
        <text x="1639" y="419" font-size="10">600</text>
        <text transform="translate(1606 416) rotate(-90)" font-size="10">100</text>
        <path d="M1337 547h309" stroke="#f01010"/>
        <path d="M1345 553l12 19" stroke="#f010b0" stroke-width="4"/>
        <polygon points="1338,572 1352,582 1360,573 1350,566" fill="none" stroke="#f010b0"/>
        <path d="M1622 553l-10 19" stroke="#f010b0" stroke-width="4"/>
        <polygon points="1632,572 1622,582 1609,573 1618,562" fill="none" stroke="#f010b0"/>
        <circle cx="1632" cy="547" r="11" fill="none" stroke="#0a8a2a"/><text x="1632" y="553" font-size="16">A</text>
        <path d="M1337 617h309" stroke="#0c6e0c"/>
        <path d="M1340 644h306" stroke="#fff" stroke-dasharray="13 4"/>
        <text x="1484" y="660" font-size="19">7250</text>
        <rect x="1337" y="660" width="309" height="1" fill="#ffe800"/>
        <rect x="1337" y="661" width="309" height="7" fill="#7a7218"/>
        <rect x="1337" y="668" width="309" height="4" fill="#585858"/>
        <path d="M1337 672h309" stroke="#fff" stroke-dasharray="2 11" stroke-dashoffset="-12"/>
        <path d="M1337 687h309" stroke="#0c6e0c"/>
        <path d="M1337 693h309M1337 711h309M1337 730h309" stroke="#00e000"/>
        <text x="1484" y="690" font-size="10">7250</text>
        <text x="1484" y="708" font-size="10">7250</text>
        <text x="1484" y="730" font-size="19">39450</text>
        <text x="1456" y="757" font-size="9">内门手顺的</text>
        <text x="1512" y="757" font-size="13">1:50</text>
        <path d="M1444 758h58" stroke="#00e000"/>
        <path d="M1645 748v10M1644 768l-3 8 3 8" stroke="#00a000" fill="none"/>
        <!-- 视图工具条 -->
        <rect x="1613" y="168" width="31" height="240" fill="#8a8a8a" fill-opacity=".62"/>
        <ellipse cx="1630" cy="193" rx="11" ry="9" fill="#3c3f42" fill-opacity=".8"/>
        <path d="M1618 255l5-5h16v17h-5M1618 255h16v17h-16zM1634 255l5-5" fill="#55595c" stroke="#222" fill-opacity=".7"/>
        <text x="1630" y="233" font-size="10" fill-opacity=".8">⊥50</text>
        <path d="M1623 268l4 4 4-4z" fill="#333"/>
        <path d="M1632 277l11 6v12l-11 6-11-6v-12z" fill="none" stroke="#0a8a2a"/>
        <text x="1632" y="295" font-size="14">B</text>
        <path d="M1640 335a10 10 0 1 1-3-7" fill="none" stroke="#5d5d5d" stroke-width="2"/>
        <rect x="1616" y="363" width="23" height="23" fill="#c0a8c0" stroke="#777"/>
        <path d="M1620 369h6M1620 374h6M1620 379h6M1631 369h5M1631 374h5M1631 379h5" stroke="#555" stroke-width="2"/>
        <rect x="1644" y="168" width="2" height="842" fill="#f4f4f4"/>
        <rect x="1644" y="540" width="4" height="100" fill="#6c7280"/>
      </svg>
    </div>

    <!-- 显示设置 -->
    <div class="set-pane">
      <div class="pn-hd">✕</div>
      <div class="set-ttl">显示设置</div>
      <ul class="nav set-tabs">
        <li class="nav-item"><a class="nav-link active" href="#">图元显示</a></li>
        <li class="nav-item"><a class="nav-link dim" href="#">楼层显示</a></li>
      </ul>
      <div class="set-tbl-w">
        <table class="table set-tb">
          <colgroup><col style="width:124px"><col style="width:63px"><col style="width:63px"></colgroup>
          <thead><tr><th>图层构件</th><th>显示图元</th><th>显示名称</th></tr></thead>
          <tbody id="setRows"></tbody>
        </table>
        <div class="set-bar"><span class="set-up"></span><span class="set-thumb"></span><span class="set-dn"></span></div>
      </div>
      <div class="set-foot d-flex justify-content-end"><button class="btn btn-std w88" type="button">恢复默认设置</button></div>
    </div>
  </div>

  <div class="stat-row d-flex align-items-start">
    <span class="st1 pt-1">X = 225797 Y = 131625</span>
    <span class="st2 pt-1">层高： 3.2</span>
    <span class="st3 pt-1">标高: 5.5~8.7</span>
    <span class="st4 pt-1">1(7)</span>
    <span class="st5 pt-1">隐藏： 0</span>
    <div class="st-btns d-flex">
      <span class="st-b st-w1 d-flex"><svg width="16" height="16"><path d="M3 2v11h11M8 13V9h3" stroke="#333" fill="none"/></svg></span>
      <span class="st-b st-w2 d-flex"><svg width="14" height="18"><path d="M1.500 3.500h11v13h-11z" fill="#fff" stroke="#3e90e8"/><rect x="1" y="0" width="6" height="6" fill="#f08a24"/></svg><span class="tri"></span></span>
      <span class="st-b st-w1 d-flex"><svg width="16" height="18"><path d="M2 1l12 16M14 1L2 17" stroke="#888"/></svg></span>
      <span class="st-b st-w2 d-flex bg-transparent"><svg width="16" height="16"><path d="M2 13h12M2 13l9-10" stroke="#333"/></svg><span class="tri"></span></span>
      <span class="st-b st-w2 d-flex bg-transparent"><svg width="16" height="16"><path d="M1 5h6M4 2v6" stroke="#333"/><rect x="7" y="9" width="8" height="5" fill="#333"/></svg><span class="tri"></span></span>
      <button class="btn st-b st-wt st-w3" type="button">跨图层选择</button>
      <button class="btn st-b st-wt st-w4" type="button">折线选择</button>
    </div>
    <span class="pt-1">按鼠标左键指定第一个角点，或拾取构件图元</span>
    <span class="pt-1 ms-auto">166.667 FPS</span>
  </div>

  <div class="taskbar d-flex align-items-center">
    <div class="tb-free d-flex justify-content-center ms-2"><svg viewBox="0 0 34 34"><defs><radialGradient id="orb"><stop offset="0" stop-color="#7fc8ee"/><stop offset="1" stop-color="#1a5f96"/></radialGradient></defs><circle cx="17" cy="17" r="17" fill="url(#orb)"/><path d="M9 10l7-2v8H9z" fill="#e94f2e"/><path d="M18 8l7 1v7h-7z" fill="#6cbb3a"/><path d="M9 18h7v8l-7-2z" fill="#2f8fe0"/><path d="M18 18h7v7l-7 1z" fill="#f5c020"/></svg></div>
    <div class="tb-free d-flex justify-content-center mx-4"><svg viewBox="0 0 34 34"><ellipse cx="11" cy="12" rx="7" ry="8" fill="#e8d43a"/><ellipse cx="23" cy="12" rx="7" ry="8" fill="#f4a43a"/><ellipse cx="10" cy="12" rx="7" ry="6" fill="#35c0d8"/><ellipse cx="17" cy="25" rx="6" ry="9" fill="#f06ab0"/></svg></div>
    <div class="tb-free d-flex justify-content-center"><svg viewBox="0 0 34 34"><path d="M24 6a13 13 0 1 0 5 17h-9" fill="none" stroke="#1f8fe8" stroke-width="6"/><path d="M28 1c3 0 4 3 4 6l2 4H22l2-4c0-3 1-6 4-6z" fill="#e8a020"/></svg></div>
    <div class="tb-btn d-flex justify-content-center align-items-center ms-3"><svg viewBox="0 0 34 34"><rect x="3" y="1" width="28" height="32" rx="2" fill="#1f5fb8" stroke="#999"/><text x="17" y="22" font-family="Liberation Sans" font-size="12" font-weight="700" fill="#cfe3ff" text-anchor="middle">CAD</text></svg></div>
    <div class="tb-btn d-flex justify-content-center align-items-center"><svg viewBox="0 0 34 34"><path d="M3 4h11l2 3h15v24H3z" fill="#f5df9c"/><path d="M3 11h28v20H3z" fill="#fbeab5"/><path d="M10 31V19h14v12" fill="#9fd0ee"/></svg></div>
    <div class="tb-btn d-flex justify-content-center align-items-center"><svg viewBox="0 0 34 34"><rect x="4" y="1" width="26" height="32" rx="5" fill="#1fb84f"/><text x="17" y="24" font-family="Liberation Sans" font-size="20" font-weight="700" fill="#fff" text-anchor="middle">S</text></svg></div>
    <div class="tb-btn on d-flex justify-content-center align-items-center"><svg viewBox="0 0 34 34"><rect x="3" y="1" width="28" height="32" rx="3" fill="#2e8ae8"/><text x="17" y="27" font-family="Liberation Sans" font-size="28" font-weight="700" fill="#e8f4ff" text-anchor="middle">T</text></svg></div>
    <div class="tb-btn d-flex justify-content-center align-items-center"><svg viewBox="0 0 34 34"><text x="17" y="25" font-family="Liberation Sans" font-size="28" font-weight="700" font-style="italic" fill="#31a8e8" text-anchor="middle">e</text><ellipse cx="17" cy="17" rx="16" ry="8" transform="rotate(-35 17 17)" fill="none" stroke="#e8b820" stroke-width="2"/></svg></div>
    <div class="tray d-flex align-items-center ms-auto">
      <svg viewBox="0 0 16 20"><path d="M2 2h12l1 12-6 5-7-3z" fill="#e8501e"/><text x="8" y="15" font-family="Liberation Sans" font-size="13" font-weight="700" fill="#fff" text-anchor="middle">S</text></svg>
      <svg viewBox="0 0 16 20"><path d="M5 1h6v6H5z" fill="none" stroke="#fff"/><path d="M3 3h6v6H3z" fill="#111" stroke="#fff"/><path d="M5 15h6l-3 3z" fill="#ddd"/></svg>
      <svg viewBox="0 0 16 20"><path d="M12 4a7 7 0 1 0 2 10H9" fill="none" stroke="#1f8fe8" stroke-width="3.500"/></svg>
      <svg viewBox="0 0 16 20"><rect y="1" width="16" height="18" rx="1" fill="#fff"/><path d="M8 4l5 9H3zM5 15h6" stroke="#3a8fe0" fill="none"/></svg>
      <svg viewBox="0 0 16 20"><ellipse cx="6" cy="8" rx="6" ry="5" fill="#2dbd3a"/><ellipse cx="11" cy="12" rx="5" ry="4" fill="#e8f8e8"/></svg>
      <svg viewBox="0 0 16 20"><ellipse cx="8" cy="9" rx="5" ry="8" fill="#222"/><ellipse cx="8" cy="12" rx="3" ry="5" fill="#fff"/><path d="M3 12h10v2H3z" fill="#e03020"/><path d="M4 18h3l-1-2zM9 18h3l-1-2z" fill="#f0a020"/></svg>
      <svg viewBox="0 0 16 20"><path d="M8 2L1 18h4l3-8 3 8h4z" fill="#2a8fc8"/></svg>
      <svg viewBox="0 0 16 20"><path d="M2 2l13 8-13 8z" fill="#2fb8d8"/><path d="M4 6l6 4-6 4z" fill="#e8d83a"/></svg>
      <svg viewBox="0 0 16 20"><rect x="2" y="3" width="9" height="11" fill="#111" stroke="#fff"/><path d="M6 14v4M3 18h7" stroke="#fff"/></svg>
      <svg viewBox="0 0 16 20"><path d="M1 7h4l4-4v14l-4-4H1z" fill="#ddd"/><path d="M11 6c2 2 2 6 0 8M13 4c3 3 3 9 0 12" fill="none" stroke="#ddd"/></svg>
      <div class="clock">16:39<br>2018/8/25</div>
      <div class="show-desk"></div>
    </div>
  </div>
</div>

<!-- 查看构件图元工程量 -->
<div class="dlg position-absolute">
  <div class="dlg-ttl d-flex">
    <span class="me-auto">查看构件图元工程量</span>
    <div class="dlg-ctl d-flex align-items-center">
      <svg width="10" height="10"><path d="M1 8h8" stroke="#fff" stroke-width="2"/></svg>
      <svg width="10" height="10"><path d="M1 1.500h8v7H1z" fill="none" stroke="#fff" stroke-width="1.500"/></svg>
      <svg width="10" height="10"><path d="M1 1l8 8M9 1L1 9" stroke="#fff" stroke-width="1.300"/></svg>
    </div>
  </div>
  <ul class="nav dlg-tabs">
    <li class="nav-item"><a class="nav-link active" href="#">构件工程量</a></li>
    <li class="nav-item"><a class="nav-link dim" href="#">做法工程量</a></li>
  </ul>
  <div class="dlg-frame">
    <div class="dlg-top">
      <div class="dlg-topin">
        <div class="opt-row d-flex align-items-center">
          <input class="form-check-input rd" type="radio" name="q" checked><span class="opt-gap">清单工程量</span>
          <input class="form-check-input rd" type="radio" name="q"><span class="opt-gap2">定额工程量</span>
          <input class="form-check-input ck" type="checkbox" checked><span class="opt-gap">显示房间、组合构件量</span>
          <input class="form-check-input ck gr" type="checkbox" checked disabled><span class="text-secondary">只显示标准层单层量</span>
        </div>
        <table class="table qty-tb">
          <colgroup><col style="width:7px"><col span="9" style="width:61px"></colgroup>
          <tr class="h18"><th class="ih"></th><th class="b" rowspan="2">楼层</th><th class="b" rowspan="2">名称</th><th class="b" colspan="7">工程量名称</th></tr>
          <tr class="h34"><th class="ih"></th><th>周长(m)</th><th>面积(m2)</th><th>卷边面积(<br>m2)</th><th>防水面积(<br>m2)</th><th>卷边长度(<br>m)</th><th>屋脊线长<br>度(m)</th><th>投影面积(<br>m2)</th></tr>
          <tr class="h33"><td class="ih">1</td><td rowspan="2">第2层</td><td>保温不上<br>人平屋面</td><td class="nm">174.74</td><td class="nm">50.6228</td><td class="nm">0</td><td class="nm">50.6228</td><td class="nm">174.74</td><td class="nm">0</td><td class="nm">44.5686</td></tr>
          <tr class="h19"><td class="ih">2</td><td class="b">小计</td><td class="nb">174.74</td><td class="nb">50.6228</td><td class="nb">0</td><td class="nb">50.6228</td><td class="nb">174.74</td><td class="nb">0</td><td class="nb">44.5686</td></tr>
          <tr class="h19 tot"><td class="ih">3</td><td colspan="2">合计</td><td class="nm">174.74</td><td class="nm">50.6228</td><td class="nm">0</td><td class="nm">50.6228</td><td class="nm">174.74</td><td class="nm">0</td><td class="nm">44.5686</td></tr>
        </table>
      </div>
    </div>
    <div class="dlg-low">
      <div class="low-cap">图元明细&nbsp; 1 (1)</div>
      <div class="low-grid">
        <div class="lg-head d-flex"><span class="lg-i"></span><span class="lg-c lg-n">构件名称</span><span class="lg-c lg-p">位置</span></div>
        <div class="lg-row d-flex"><span class="lg-i">1</span><span class="lg-d lg-n">保温不上人...</span><span class="lg-d lg-p">&lt;4+3625,B-2790&gt;</span></div>
      </div>
      <div class="low-foot d-flex">
        <button class="btn btn-std w139" type="button">设置分类及工程量</button>
        <button class="btn btn-std w139" type="button">导出到Excel</button>
        <button class="btn btn-exit ms-auto" type="button">退出</button>
      </div>
    </div>
  </div>
</div>

<!-- 标注：红色箭头和圈 -->
<svg class="mark-svg" viewBox="0 0 1920 1080">
  <polygon points="578,591 854,390 846,387 889,370 859,405 858,396" fill="#ee3b3b"/>
  <ellipse cx="876" cy="347" rx="37" ry="75" fill="none" stroke="#e8484a"/>
</svg>

<script>
  // 左侧导航树
  const navData = [
    ["柱","f-plus"],["墙","f-plus"],["门窗洞","f-plus"],["梁","f-plus"],["板","f-plus"],["楼梯","f-plus"],["装修","f-open"],
    ["房间(F)","n-room",1],["楼地面(V)","n-floor",1],["踢脚(S)","n-skirt",1],["墙裙(U)","n-dado",1],["墙面(W)","n-wall",1],["天棚(P)","n-ceil",1],["吊顶(K)","n-hang",1],["独立柱装修","n-col",1],["单梁装修","n-beam",1],
    ["土方","f-plus"],["基础","f-plus"],["其它","f-open"],
    ["建筑面积(U)","n-area",1],["平整场地(V)","n-site",1],["散水(S)","n-apron",1],["台阶","n-step",1],["后浇带(JD)","n-post",1],["挑檐(T)","n-eave",1],["雨蓬(P)","n-eave",1],["阳台(Y)","n-balc",1],["屋面(W)","n-roof",1,true],["保温层(H)","n-ins",1],["栏板(K)","n-rail",1],["压顶(YD)","n-cope",1],["栏杆扶手(G)","n-hand",1],
    ["自定义","f-plus"]
  ];
  document.getElementById("navList").innerHTML = navData.map(([txt, ico, kid, sel]) =>
    `<div class="nv-row d-flex align-items-center ${kid ? "kid" : ""} ${sel ? "sel" : ""}"><svg class="ico"><use href="#${ico}"/></svg>${txt}</div>`
  ).join("");

  // 显示设置表格：g=分组行，c=显示图元已勾选，p=半选，e=分组最后一行
  const setData = [
    ["剪力墙",{c:1}],["人防门框墙",{c:1}],["砌体墙",{c:1}],["砌体加筋"],["保温墙",{c:1}],["暗梁"],["墙垛"],["幕墙",{c:1,e:1}],
    ["门窗洞",{g:1,p:1}],["门"],["窗"],["门联窗"],["墙洞"],["带形窗",{c:1}],["带形洞"],["飘窗"],["老虎窗"],["过梁"],["壁龛",{e:1}],
    ["梁",{g:1}],["梁"],["连梁"],["圈梁",{e:1}],
    ["板",{g:1}],["现浇板"],["螺旋板"],["柱帽"],["板洞"],["板受力筋"],["板负筋"],["楼层板带",{e:1}],
    ["楼梯",{g:1}],["楼梯"],["直形梯段"]
  ];
  document.getElementById("setRows").innerHTML = setData.map(([txt, o = {}]) => {
    const first = o.g
      ? `<td class="nm"><span class="pm">−</span>${txt}</td>`
      : `<td class="nm"><span class="tr-v ${o.e ? "end" : ""}"></span><span class="tr-h"></span>${txt}</td>`;
    return `<tr class="${o.g ? "grp" : ""}">${first}
      <td><input class="form-check-input ck ${o.p ? "part" : ""}" type="checkbox" ${o.c ? "checked" : ""}></td>
      <td><input class="form-check-input ck" type="checkbox"></td></tr>`;
  }).join("");
</script>
<script src="https://cdn.jsdelivr.net/npm/bootstrap@5.3.0/dist/js/bootstrap.bundle.min.js"></script>
</body>
</html>
